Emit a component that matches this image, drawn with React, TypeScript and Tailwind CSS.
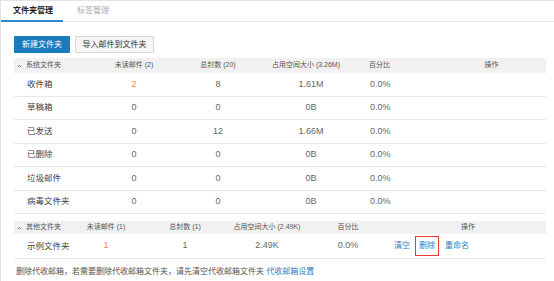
import React from "react";

const font = { fontFamily: '"Liberation Sans", "Noto Sans CJK SC", sans-serif' };

type Row = { name: string; unread: string; total: string; size: string; pct: string; orange?: boolean };

const sysRows: Row[] = [
  { name: "收件箱", unread: "2", total: "8", size: "1.61M", pct: "0.0%", orange: true },
  { name: "草稿箱", unread: "0", total: "0", size: "0B", pct: "0.0%" },
  { name: "已发送", unread: "0", total: "12", size: "1.66M", pct: "0.0%" },
  { name: "已删除", unread: "0", total: "0", size: "0B", pct: "0.0%" },
  { name: "垃圾邮件", unread: "0", total: "0", size: "0B", pct: "0.0%" },
  { name: "病毒文件夹", unread: "0", total: "0", size: "0B", pct: "0.0%" },
];

function Caret() {
  return (
    <svg width="5" height="4" viewBox="0 0 5 4" className="mr-[4px]">
      <path d="M0.8 3.2 L2.5 1.2 L4.2 3.2" fill="none" stroke="#666" strokeWidth="0.9" />
    </svg>
  );
}

export default function App() {
  return (
    <div
      className="w-[554px] h-[281px] bg-white border-t border-l border-[#e3e3e3] overflow-hidden text-[#444]"
      style={font}
    >
      {/* tabs */}
      <div className="flex h-[21px] border-b border-[#e6e6e6]">
        <div className="w-[62px] h-[21px] border-b-2 border-[#2f86d0] flex items-center pl-[12px] text-[8px] font-bold text-[#222]">
          文件夹管理
        </div>
        <div className="h-[20px] flex items-center pl-[14px] text-[8px] text-[#aaa]">标签管理</div>
      </div>

      {/* buttons */}
      <div className="flex gap-[5px] pl-[13px] pt-[14px]">
        <div className="w-[56px] h-[17px] bg-[#1c7bbd] text-white text-[8px] flex items-center justify-center rounded-[1px]">
          新建文件夹
        </div>
        <div className="w-[79px] h-[17px] bg-[#f6f6f6] border border-[#d6d6d6] text-[#333] text-[8px] flex items-center justify-center rounded-[1px]">
          导入邮件到文件夹
        </div>
      </div>

      {/* table 1 */}
      <div className="ml-[13px] w-[532px] mt-[5px]">
        <div className="grid grid-cols-[80px_80px_88px_88px_70px_1fr] h-[15px] bg-[#f1f1f1] text-[7px] text-[#555] items-center">
          <div className="flex items-center pl-[3px]">
            <Caret />
            <span>系统文件夹</span>
          </div>
          <div className="text-center">未读邮件 (2)</div>
          <div className="text-center">总封数 (20)</div>
          <div className="text-center">占用空间大小 (3.26M)</div>
          <div className="pl-[19px]">百分比</div>
          <div className="text-center pl-[17px]">操作</div>
        </div>
        {sysRows.map((r) => (
          <div
            key={r.name}
            className="grid grid-cols-[80px_80px_88px_88px_70px_1fr] h-[23.5px] border-b border-[#e8e8e8] text-[9px] items-center"
          >
            <div className="pl-[13px] text-[8.5px] text-[#444]">{r.name}</div>
            <div className={"text-center " + (r.orange ? "text-[#f0863a]" : "text-[#666]")}>{r.unread}</div>
            <div className="text-center text-[#666]">{r.total}</div>
            <div className="text-center pl-[10px] text-[#666]">{r.size}</div>
            <div className="pl-[20px] text-[#666]">{r.pct}</div>
            <div />
          </div>
        ))}
      </div>

      {/* table 2 */}
      <div className="ml-[13px] w-[532px] mt-[7px]">
        <div className="grid grid-cols-[53px_78px_80px_84px_78px_1fr] h-[13px] bg-[#f1f1f1] text-[7px] text-[#555] items-center">
          <div className="flex items-center pl-[3px] whitespace-nowrap">
            <Caret />
            <span>其他文件夹</span>
          </div>
          <div className="text-center">未读邮件 (1)</div>
          <div className="text-center">总封数 (1)</div>
          <div className="text-center whitespace-nowrap">占用空间大小 (2.49K)</div>
          <div className="text-center">百分比</div>
          <div className="text-center pl-[3px]">操作</div>
        </div>
        <div className="grid grid-cols-[53px_78px_80px_84px_78px_1fr] h-[25px] border-b border-[#e8e8e8] text-[9px] items-center">
          <div className="pl-[13px] text-[8.5px] text-[#444] whitespace-nowrap">示例文件夹</div>
          <div className="text-center text-[#f0863a]">1</div>
          <div className="text-center text-[#666]">1</div>
          <div className="text-center text-[#666]">2.49K</div>
          <div className="text-center text-[#666]">0.0%</div>
          <div className="flex items-center pl-[7px] text-[8px] text-[#2a7fc4]">
            <span>清空</span>
            <span className="ml-[5px] h-[20px] w-[24px] border-[1.5px] border-[#e63b2e] flex items-center justify-center">
              删除
            </span>
            <span className="ml-[6px]">重命名</span>
          </div>
        </div>
      </div>

      {/* footnote */}
      <div className="pl-[15px] pt-[7px] text-[8px] text-[#555] whitespace-nowrap">
        删除代收邮箱，若需要删除代收邮箱文件夹，请先清空代收邮箱文件夹 <span className="text-[#2a7fc4]">代收邮箱设置</span>
      </div>
    </div>
  );
}
